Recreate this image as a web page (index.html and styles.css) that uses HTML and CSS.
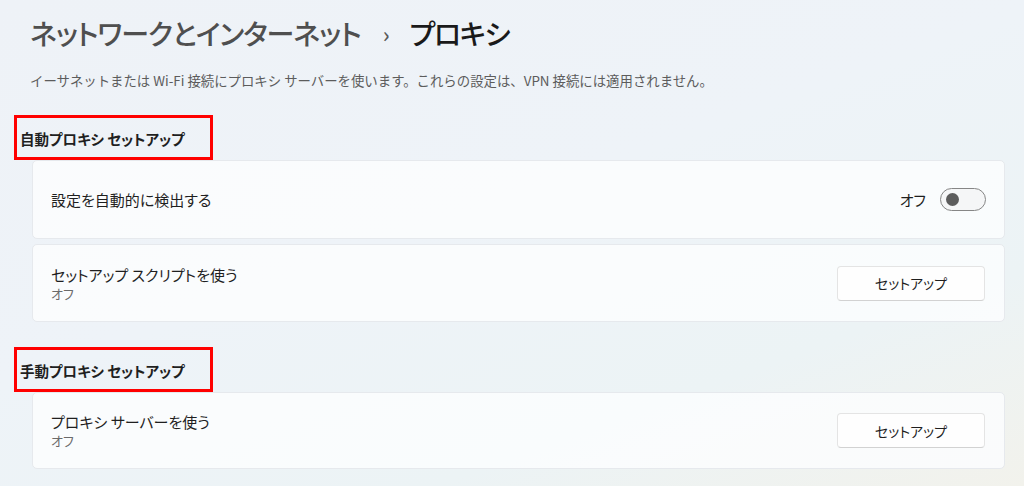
FILE: index.html
```html
<!DOCTYPE html>
<html lang="ja">
<head>
    <meta charset="UTF-8">
    <meta name="viewport" content="width=device-width, initial-scale=1.0">
    <title>プロキシ</title>
    <link rel="stylesheet" href="styles.css">
</head>
<body>
    <div class="page">
        <h1 class="crumbs">
            <span class="crumb-parent">ネットワークとインターネット</span>
            <span class="crumb-sep">›</span>
            <span class="crumb-current">プロキシ</span>
        </h1>

        <p class="intro">イーサネットまたは Wi-Fi 接続にプロキシ サーバーを使います。これらの設定は、VPN 接続には適用されません。</p>

        <h2 class="section-title">自動プロキシ セットアップ</h2>

        <div class="card">
            <div class="card-text">
                <div class="card-title">設定を自動的に検出する</div>
            </div>
            <div class="card-ctrl">
                <span class="toggle-label">オフ</span>
                <span class="toggle"><span class="knob"></span></span>
            </div>
        </div>

        <div class="card card-gap">
            <div class="card-text">
                <div class="card-title">セットアップ スクリプトを使う</div>
                <div class="card-sub">オフ</div>
            </div>
            <button class="btn">セットアップ</button>
        </div>

        <h2 class="section-title section-two">手動プロキシ セットアップ</h2>

        <div class="card card-short">
            <div class="card-text">
                <div class="card-title">プロキシ サーバーを使う</div>
                <div class="card-sub">オフ</div>
            </div>
            <button class="btn">セットアップ</button>
        </div>
    </div>
</body>
</html>
```

FILE: styles.css
```css
html, body {
  margin: 0;
  height: 100%;
}

body {
  font-family: "Noto Sans CJK JP", "Noto Sans", sans-serif;
  font-feature-settings: "palt";
  color: #1b1b1b;
  background: linear-gradient(160deg, #eef2f7 0%, #eef3f8 45%, #ecf3f5 75%, #f2f2ec 100%);
  overflow: hidden;
}

.page {
  padding: 0 19px 0 32px;
}

.crumbs {
  margin: 0 0 0 -2px;
  padding-top: 9px;
  height: 47px;
  font-size: 28px;
  line-height: 40px;
  font-weight: 500;
  display: flex;
  align-items: center;
}

.crumb-parent {
  color: #4f4f4f;
  letter-spacing: -1px;
}

.crumb-sep {
  color: #5a5a5a;
  font-size: 22px;
  margin: 0 20px 0 22px;
}

.crumb-current {
  color: #1a1a1a;
  letter-spacing: -1.5px;
}

.intro {
  margin: 14px 0 0 -2px;
  font-size: 13.4px;
  line-height: 20px;
  color: #5c5c5c;
  font-feature-settings: normal;
}

.section-title {
  margin: 25px 0 0 -18px;
  box-sizing: border-box;
  width: 199px;
  height: 45px;
  padding: 11px 0 0 3px;
  border: 3px solid #f00;
  font-size: 14.5px;
  line-height: 20px;
  font-weight: 700;
  color: #1f1f1f;
}

.section-two {
  margin-top: 25px;
}

.card {
  box-sizing: border-box;
  height: 79px;
  padding: 0 18px 0 18px;
  display: flex;
  align-items: center;
  justify-content: space-between;
  background: rgba(252, 253, 254, 0.85);
  border: 1px solid #e6e9ed;
  border-radius: 5px;
}

.card-gap {
  margin-top: 5px;
  height: 78px;
}

.card-short {
  height: 77px;
}

.card-title {
  font-size: 15px;
  line-height: 20px;
  color: #1f1f1f;
}

.card-sub {
  font-size: 13px;
  line-height: 17px;
  color: #6a6a6a;
}

.card-ctrl {
  display: flex;
  align-items: center;
}

.toggle-label {
  font-size: 15px;
  color: #1f1f1f;
  margin-right: 14px;
}

.toggle {
  box-sizing: border-box;
  width: 46px;
  height: 23px;
  border: 1px solid #868686;
  border-radius: 12px;
  background: #f5f6f7;
  display: flex;
  align-items: center;
  padding-left: 5px;
}

.knob {
  width: 13px;
  height: 13px;
  border-radius: 50%;
  background: #5c5c5c;
}

.btn {
  box-sizing: border-box;
  width: 148px;
  height: 35px;
  margin-right: 1px;
  background: #fefefe;
  border: 1px solid #e4e4e4;
  border-bottom-color: #d2d2d2;
  border-radius: 4px;
  font-family: inherit;
  font-feature-settings: "palt";
  font-size: 14px;
  color: #1f1f1f;
}
```
